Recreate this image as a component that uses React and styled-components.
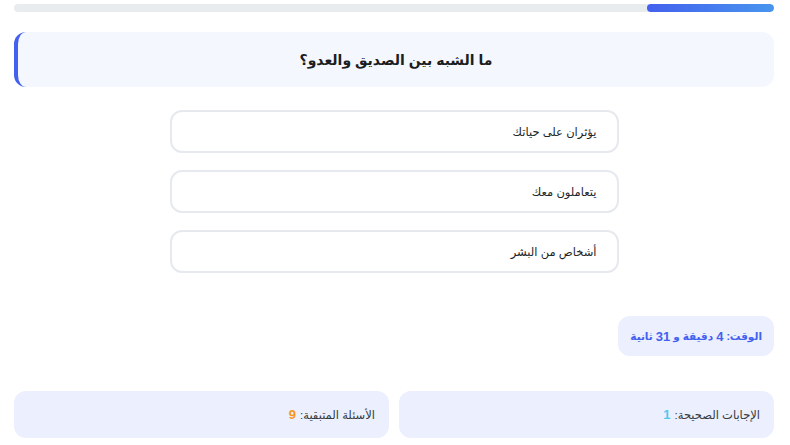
import styled, { createGlobalStyle } from "styled-components";

const GlobalStyle = createGlobalStyle`
  * { box-sizing: border-box; }
  body {
    margin: 0;
    background: #ffffff;
    font-family: "Liberation Sans", Arial, "DejaVu Sans", sans-serif;
  }
`;

const Page = styled.div`
  direction: rtl;
  padding: 4px 16px 0 14px;
  display: flex;
  flex-direction: column;
`;

const Progress = styled.div`
  height: 8px;
  border-radius: 4px;
  background: #e9ecef;
  overflow: hidden;
  display: flex;
`;

const ProgressFill = styled.div`
  height: 100%;
  border-radius: 4px;
  background: linear-gradient(to left, #4895ef, #4361ee);
`;

const QuestionCard = styled.div`
  margin-top: 20px;
  height: 55px;
  background: #f4f7fe;
  border-radius: 12px;
  border-left: 4px solid #4361ee;
  display: flex;
  align-items: center;
  justify-content: center;
`;

const QuestionText = styled.h2`
  margin: 0;
  font-size: 14px;
  font-weight: 700;
  color: #1b1d21;
`;

const Options = styled.div`
  margin: 23px auto 0;
  width: 449px;
  display: flex;
  flex-direction: column;
  gap: 17px;
`;

const Option = styled.button`
  direction: rtl;
  height: 43px;
  width: 100%;
  border: 2px solid #e6e9ee;
  border-radius: 12px;
  background: #ffffff;
  padding: 0 20px;
  text-align: right;
  font-family: inherit;
  font-size: 11.5px;
  color: #212529;
  cursor: pointer;
`;

const TimerRow = styled.div`
  margin-top: 43px;
  display: flex;
`;

const Timer = styled.div`
  height: 40px;
  padding: 0 12px;
  border-radius: 12px;
  background: #ebeffe;
  display: flex;
  align-items: center;
  font-size: 10.5px;
  font-weight: 700;
  color: #4361ee;
`;

const TimerNum = styled.span`
  font-size: 13px;
  margin: 0 3px;
`;

const Stats = styled.div`
  margin-top: 35px;
  display: grid;
  grid-template-columns: 1fr 1fr;
  gap: 10px;
`;

const StatBox = styled.div`
  height: 47px;
  border-radius: 12px;
  background: #eceffd;
  display: flex;
  align-items: center;
  padding: 0 14px;
  font-size: 11.5px;
  color: #343a40;
`;

const StatValue = styled.span`
  font-weight: 700;
  font-size: 13px;
  margin-right: 4px;
  color: ${(p) => p.color};
`;

const options = ["يؤثران على حياتك", "يتعاملون معك", "أشخاص من البشر"];

export default function App() {
  return (
    <>
      <GlobalStyle />
      <Page>
        <Progress>
          <ProgressFill style={{ width: "16.7%" }} />
        </Progress>
        <QuestionCard>
          <QuestionText>ما الشبه بين الصديق والعدو؟</QuestionText>
        </QuestionCard>
        <Options>
          {options.map((o) => (
            <Option key={o}>{o}</Option>
          ))}
        </Options>
        <TimerRow>
          <Timer>
            الوقت: <TimerNum>4</TimerNum> دقيقة و <TimerNum>31</TimerNum> ثانية
          </Timer>
        </TimerRow>
        <Stats>
          <StatBox>
            الإجابات الصحيحة: <StatValue color="#4cc9f0">1</StatValue>
          </StatBox>
          <StatBox>
            الأسئلة المتبقية: <StatValue color="#f8961e">9</StatValue>
          </StatBox>
        </Stats>
      </Page>
    </>
  );
}
